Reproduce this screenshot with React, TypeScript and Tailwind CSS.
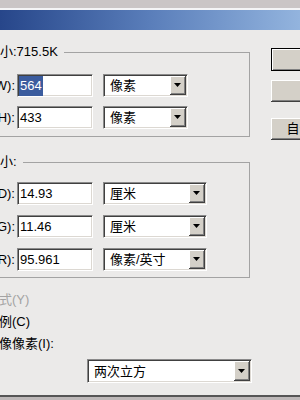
import React from 'react';

const sunken =
  'border border-t-[#8a8a8a] border-l-[#8a8a8a] border-r-white border-b-white shadow-[inset_1px_1px_0_#404040,inset_-1px_-1px_0_#dcd8d2] bg-white';

function Arrow() {
  return (
    <div className="w-[16px] h-full bg-[#d4d0c8] border-r border-b border-[#404040] shadow-[inset_1px_1px_0_#fff,inset_-1px_-1px_0_#808080] flex items-center justify-center shrink-0">
      <svg width="7" height="4" viewBox="0 0 7 4">
        <polygon points="0,0 7,0 3.5,4" fill="#000" />
      </svg>
    </div>
  );
}

function Select({ value, w, h = 'h-[23px]' }: { value: string; w: string; h?: string }) {
  return (
    <div className={`${sunken} ${w} ${h} flex items-stretch p-px`}>
      <div className="flex-1 flex items-center pl-[5px] text-[13px] leading-none">{value}</div>
      <Arrow />
    </div>
  );
}

function Input({ children }: { children: React.ReactNode }) {
  return (
    <div className={`${sunken} ml-[2px] w-[76px] h-[23px] flex items-center pl-[2px] text-[13px]`}>{children}</div>
  );
}

function Row({ label, value, unit, selW }: { label: string; value: React.ReactNode; unit: string; selW: string }) {
  return (
    <div className="flex items-center h-[23px]">
      <span className="w-[84px] text-right text-[13px] leading-none whitespace-nowrap">{label}</span>
      <Input>{value}</Input>
      <div className="ml-[10px]">
        <Select value={unit} w={selW} />
      </div>
    </div>
  );
}

function Check({ label, disabled }: { label: string; disabled?: boolean }) {
  return (
    <div className="flex items-center h-[22px]">
      <div className={`${sunken} ml-[12px] w-[13px] h-[13px] shrink-0`} />
      <span className={`ml-[5px] text-[13px] leading-none whitespace-nowrap ${disabled ? 'text-[#a3a3a3]' : 'text-black'}`}>
        {label}
      </span>
    </div>
  );
}

const btn =
  'bg-[#d4d0c8] shadow-[inset_1px_1px_0_#fff,inset_-1px_-1px_0_#808080] border-r border-b border-[#404040] w-[86px] flex items-center justify-center text-[13px] leading-none';

export default function App() {
  return (
    <div className="w-[300px] h-[400px] overflow-hidden flex flex-col bg-[#ebeae9] text-black font-['Liberation_Sans','Noto_Sans_CJK_SC',sans-serif]">
      <div className="h-[8px] bg-[#cac5c6] shrink-0" />
      <div className="h-[2px] bg-[#f4f4f6] shrink-0" />
      <div className="h-[20px] bg-linear-to-r from-[#27468a] via-[#5a7eba] to-[#93b4de] shrink-0" />

      <div className="flex-1 flex">
        {/* left: size groups */}
        <div className="-ml-[70px] w-[320px] shrink-0 pt-[15px]">
          <fieldset className="border border-[#a3a3a3] pb-[7px]">
            <legend className="ml-[28px] pl-[2px] pr-[6px] leading-[14px] text-[13px]">像素大小:715.5K</legend>
            <div className="pt-[15px] flex flex-col gap-[9px]">
              <Row
                label="宽度(W):"
                value={<span className="-ml-[1px] px-[1px] bg-[#3b5c9e] text-white leading-[20px] inline-block">564</span>}
                unit="像素"
                selW="w-[85px]"
              />
              <Row label="高度(H):" value="433" unit="像素" selW="w-[85px]" />
            </div>
          </fieldset>

          <fieldset className="mt-[18px] border border-[#a3a3a3] pb-[6px]">
            <legend className="ml-[28px] pl-[2px] pr-[6px] leading-[14px] text-[13px]">文档大小:</legend>
            <div className="pt-[13px] flex flex-col gap-[10px]">
              <Row label="宽度(D):" value="14.93" unit="厘米" selW="w-[104px]" />
              <Row label="高度(G):" value="11.46" unit="厘米" selW="w-[104px]" />
              <Row label="分辨率(R):" value="95.961" unit="像素/英寸" selW="w-[104px]" />
            </div>
          </fieldset>

          <div className="mt-[10px] flex flex-col">
            <Check label="缩放样式(Y)" disabled />
            <Check label="约束比例(C)" />
            <Check label="重定图像像素(I):" />
          </div>

          <div className="mt-[5px] ml-[157px]">
            <Select value="两次立方" w="w-[165px]" h="h-[24px]" />
          </div>
        </div>

        {/* right: buttons */}
        <div className="ml-[21px] pt-[18px] flex flex-col shrink-0">
          <div className={`${btn} h-[23px] border border-black`}>好</div>
          <div className={`${btn} h-[22px] mt-[9px]`}>取消</div>
          <div className={`${btn} h-[22px] mt-[16px]`}>自动(A)...</div>
        </div>
      </div>

      <div className="h-[2px] bg-[#555] shrink-0" />
      <div className="h-[3px] bg-[#bdb8b8] shrink-0" />
    </div>
  );
}
